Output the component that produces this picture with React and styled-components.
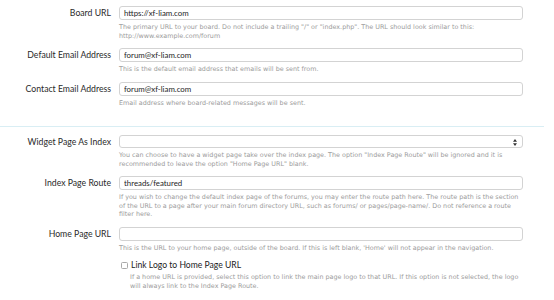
import React from "react";
import styled, { createGlobalStyle } from "styled-components";

const GlobalStyle = createGlobalStyle`
  html, body {
    margin: 0;
    padding: 0;
    background: #ffffff;
  }
  body {
    font-family: "Lato", "DejaVu Sans", sans-serif;
    color: #2d2d2d;
  }
`;

const Page = styled.div`
  width: 554px;
  height: 300px;
  overflow: hidden;
  padding-top: 6px;
  box-sizing: border-box;
`;

const Section = styled.div`
  display: flex;
  flex-direction: column;
  gap: 8px;
`;

const Separator = styled.div`
  width: 544px;
  height: 1px;
  background: #d9eef4;
  margin: 19px 0 8px;
`;

const Row = styled.div`
  display: grid;
  grid-template-columns: 111px 404px;
  column-gap: 8px;
  align-items: start;
`;

const Label = styled.label`
  text-align: right;
  font-size: 8.7px;
  line-height: ${(p) => p.$h || 14}px;
  color: #2a2a2a;
  white-space: nowrap;
`;

const Field = styled.div`
  display: flex;
  flex-direction: column;
`;

const TextInput = styled.input`
  box-sizing: border-box;
  width: 100%;
  height: 14px;
  margin: 0;
  padding: 0 4px;
  border: 1px solid #d3d3d3;
  border-radius: 3px;
  background: #fff;
  font-family: "Lato", sans-serif;
  font-size: 7.85px;
  color: #1e1e1e;
  outline: none;
`;

const SelectBox = styled.div`
  position: relative;
  box-sizing: border-box;
  width: 100%;
  height: 13px;
  border: 1px solid #d3d3d3;
  border-radius: 3px;
  background: #fff;
`;

const SelectArrows = styled.svg`
  position: absolute;
  right: 5px;
  top: 2.5px;
  width: 4px;
  height: 7px;
`;

const Hint = styled.div`
  margin-top: 3px;
  padding-left: ${(p) => p.$indent || 0}px;
  font-family: "DejaVu Sans", "Verdana", sans-serif;
  font-size: 6.4px;
  line-height: 8.5px;
  color: #9b9b9b;
  white-space: nowrap;
`;

const CheckRow = styled.label`
  display: flex;
  align-items: center;
  gap: 3px;
  height: 10px;
  font-size: 8.6px;
  color: #222;
  padding-left: 2px;
`;

const CheckBox = styled.span`
  box-sizing: border-box;
  width: 7px;
  height: 7px;
  border: 1px solid #a9a9a9;
  border-radius: 1.5px;
  background: #fff;
`;

const Lines = ({ lines, indent }) => (
  <Hint $indent={indent}>
    {lines.map((l, i) => (
      <div key={i}>{l}</div>
    ))}
  </Hint>
);

const TextRow = ({ label, value, hint }) => (
  <Row>
    <Label>{label}</Label>
    <Field>
      <TextInput type="text" defaultValue={value} />
      <Lines lines={hint} />
    </Field>
  </Row>
);

export default function App() {
  return (
    <Page>
      <GlobalStyle />
      <Section>
        <TextRow
          label="Board URL"
          value="https://xf-liam.com"
          hint={[
            'The primary URL to your board. Do not include a trailing "/" or "index.php". The URL should look similar to this:',
            "http://www.example.com/forum",
          ]}
        />
        <TextRow
          label="Default Email Address"
          value="forum@xf-liam.com"
          hint={["This is the default email address that emails will be sent from."]}
        />
        <TextRow
          label="Contact Email Address"
          value="forum@xf-liam.com"
          hint={["Email address where board-related messages will be sent."]}
        />
      </Section>

      <Separator />

      <Section>
        <Row>
          <Label $h={13}>Widget Page As Index</Label>
          <Field>
            <SelectBox>
              <SelectArrows viewBox="0 0 4 7">
                <path d="M0 2.8 L2 0 L4 2.8 Z" fill="#333" />
                <path d="M0 4.2 L2 7 L4 4.2 Z" fill="#333" />
              </SelectArrows>
            </SelectBox>
            <Lines
              lines={[
                'You can choose to have a widget page take over the index page. The option "Index Page Route" will be ignored and it is',
                'recommended to leave the option "Home Page URL" blank.',
              ]}
            />
          </Field>
        </Row>
        <TextRow
          label="Index Page Route"
          value="threads/featured"
          hint={[
            "If you wish to change the default index page of the forums, you may enter the route path here. The route path is the section",
            "of the URL to a page after your main forum directory URL, such as forums/ or pages/page-name/. Do not reference a route",
            "filter here.",
          ]}
        />
        <TextRow
          label="Home Page URL"
          value=""
          hint={["This is the URL to your home page, outside of the board. If this is left blank, 'Home' will not appear in the navigation."]}
        />
        <Row>
          <span />
          <Field>
            <CheckRow>
              <CheckBox />
              Link Logo to Home Page URL
            </CheckRow>
            <Lines
              indent={11}
              lines={[
                "If a home URL is provided, select this option to link the main page logo to that URL. If this option is not selected, the logo",
                "will always link to the Index Page Route.",
              ]}
            />
          </Field>
        </Row>
      </Section>
    </Page>
  );
}
